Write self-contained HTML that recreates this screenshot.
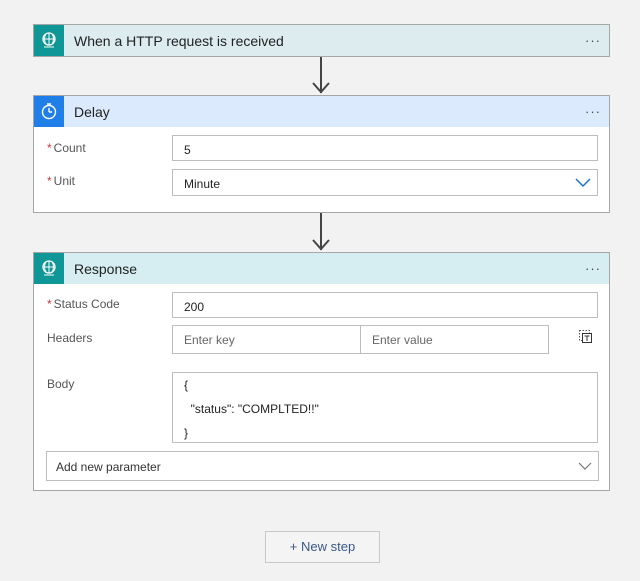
<!DOCTYPE html>
<html><head><style>
body{margin:0;width:640px;height:581px;background:#f2f2f2;font-family:"Liberation Sans",sans-serif;position:relative;overflow:hidden;color:#333}
.card{position:absolute;left:33px;width:577px;background:#fff;border:1px solid #a6a6a6;box-sizing:border-box}
.hdr{position:absolute;left:0;top:0;right:0;height:31px}
.ic{position:absolute;left:0;top:0;width:30px;height:31px}
.ttl{position:absolute;left:40px;top:8px;font-size:14px;color:#222}
.dots{position:absolute;right:8px;top:8px;font-size:13px;letter-spacing:1px;color:#444}
.lbl{position:absolute;font-size:12px;color:#555}
.lbl b{color:#d13438;font-weight:normal;margin-right:2px}
.inp{position:absolute;border:1px solid #bdbdbd;box-sizing:border-box;font-size:12px;color:#222;padding:7px 11px;background:#fff}
.ph{color:#666}
.arrow{position:absolute;left:320px;width:2px;background:#444}
</style></head><body>
<div class="arrow" style="top:56px;height:37px"></div>
<svg style="position:absolute;left:312px;top:82px" width="18" height="12"><path d="M1 1 L9 10 L17 1" fill="none" stroke="#444" stroke-width="2"/></svg>
<div class="arrow" style="top:212px;height:38px"></div>
<svg style="position:absolute;left:312px;top:239px" width="18" height="12"><path d="M1 1 L9 10 L17 1" fill="none" stroke="#444" stroke-width="2"/></svg>

<div class="card" style="top:24px;height:33px">
 <div class="hdr" style="background:#dcecef"><div class="ic" style="background:#0f9696">
 <svg width="30" height="31"><circle cx="15" cy="14" r="6" fill="none" stroke="#fff" stroke-width="1.3"/><path d="M9 14h12M15 8v12M12 9c-2 3-2 7 0 10M18 9c2 3 2 7 0 10M10 22h10" stroke="#fff" fill="none" stroke-width="1"/></svg></div>
 <div class="ttl">When a HTTP request is received</div><div class="dots">···</div></div>
</div>

<div class="card" style="top:95px;height:118px">
 <div class="hdr" style="background:#dbeafc"><div class="ic" style="background:#1f7ee8">
 <svg width="30" height="31"><circle cx="15" cy="16" r="6.5" fill="none" stroke="#fff" stroke-width="1.4"/><path d="M15 16v-4M15 16h3M13 8h4" stroke="#fff" stroke-width="1.4" fill="none"/></svg></div>
 <div class="ttl">Delay</div><div class="dots">···</div></div>
 <div class="lbl" style="left:13px;top:45px"><b>*</b>Count</div>
 <div class="inp" style="left:138px;top:39px;width:426px;height:26px">5</div>
 <div class="lbl" style="left:13px;top:78px"><b>*</b>Unit</div>
 <div class="inp" style="left:138px;top:73px;width:426px;height:27px">Minute
 <svg style="position:absolute;right:6px;top:8px" width="16" height="10"><path d="M1 1l7 7 7-7" fill="none" stroke="#1f6fd0" stroke-width="1.5"/></svg></div>
</div>

<div class="card" style="top:252px;height:239px">
 <div class="hdr" style="background:#d6eef1"><div class="ic" style="background:#0f9696">
 <svg width="30" height="31"><circle cx="15" cy="14" r="6" fill="none" stroke="#fff" stroke-width="1.3"/><path d="M9 14h12M15 8v12M12 9c-2 3-2 7 0 10M18 9c2 3 2 7 0 10M10 22h10" stroke="#fff" fill="none" stroke-width="1"/></svg></div>
 <div class="ttl">Response</div><div class="dots">···</div></div>
 <div class="lbl" style="left:13px;top:44px"><b>*</b>Status Code</div>
 <div class="inp" style="left:138px;top:39px;width:426px;height:26px">200</div>
 <div class="lbl" style="left:13px;top:78px">Headers</div>
 <div class="inp ph" style="left:138px;top:72px;width:189px;height:29px">Enter key</div>
 <div class="inp ph" style="left:326px;top:72px;width:189px;height:29px">Enter value</div>
 <svg style="position:absolute;left:544px;top:76px" width="16" height="16"><rect x="1.5" y="1.5" width="10" height="10" fill="none" stroke="#555" stroke-dasharray="1.5 1.5"/><rect x="4.5" y="4.5" width="9" height="9" fill="#fff" stroke="#333"/><path d="M6.5 7h5M9 7v5" stroke="#333"/></svg>
 <div class="lbl" style="left:13px;top:124px">Body</div>
 <div class="inp" style="left:138px;top:119px;width:426px;height:71px;line-height:24px;padding-top:0">{<br>&nbsp;&nbsp;"status": "COMPLTED!!"<br>}</div>
 <div class="inp" style="left:12px;top:198px;width:553px;height:30px;color:#333;padding:8px 9px">Add new parameter
 <svg style="position:absolute;right:6px;top:10px" width="14" height="9"><path d="M1 1l6 6 6-6" fill="none" stroke="#777" stroke-width="1.2"/></svg></div>
</div>

<div style="position:absolute;left:265px;top:531px;width:115px;height:32px;box-sizing:border-box;border:1px solid #c8c8c8;background:#f4f4f4;text-align:center;line-height:30px;font-size:13px;color:#3a5a8a">+ New step</div>
</body></html>
